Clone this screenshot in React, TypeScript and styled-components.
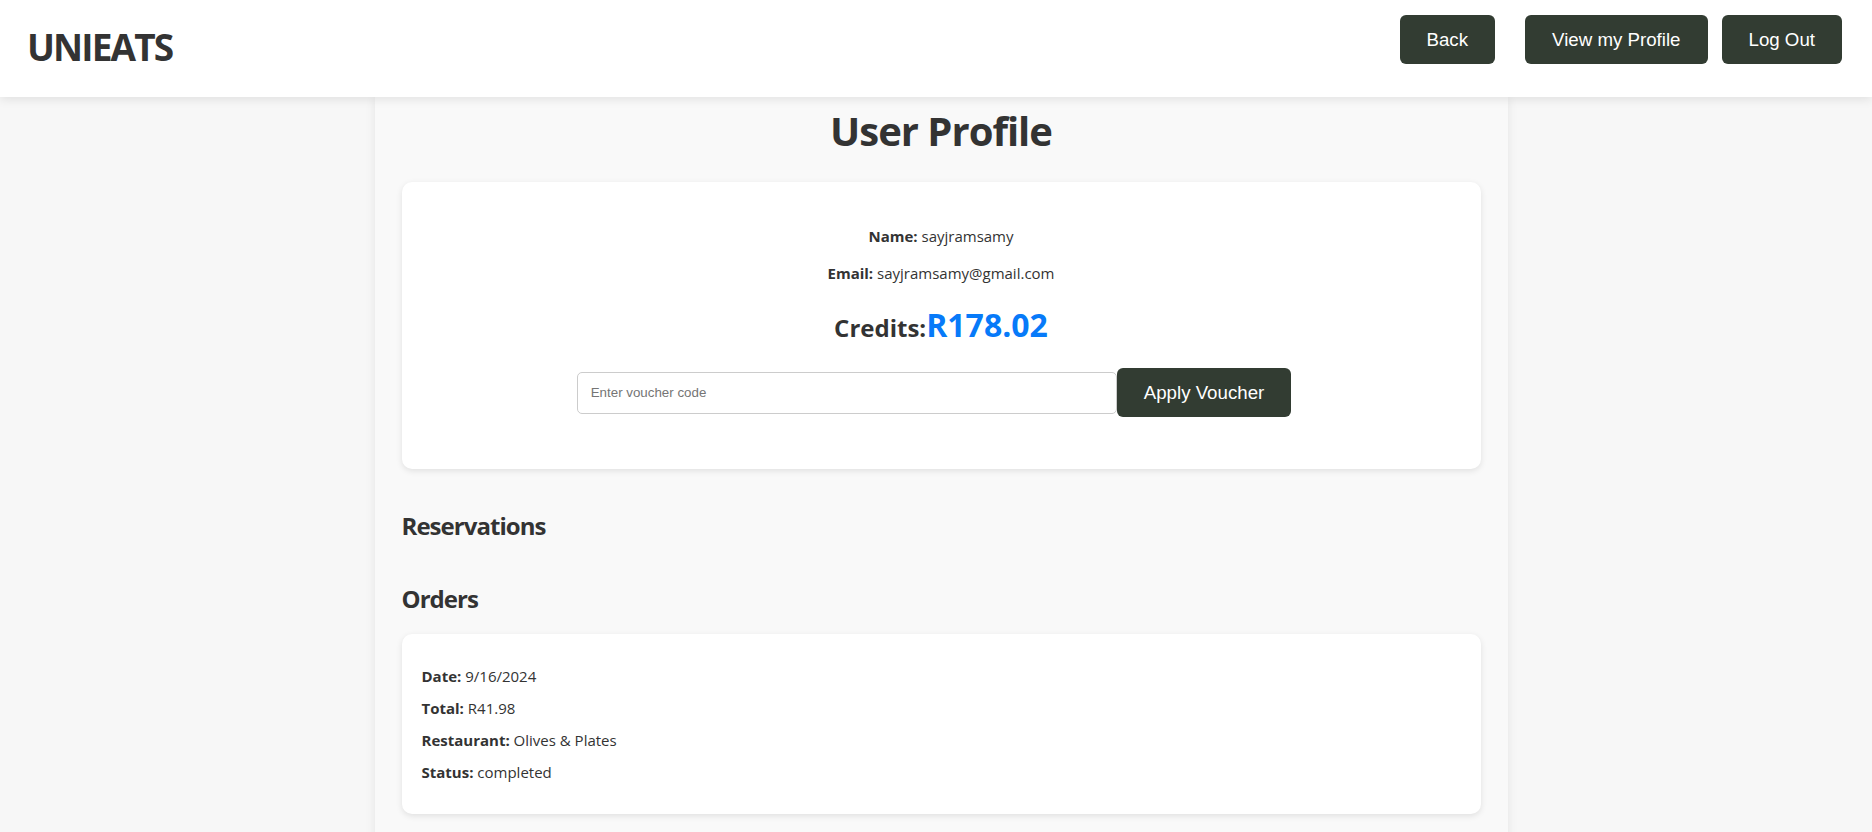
import React from 'react';
import styled, { createGlobalStyle } from 'styled-components';

const TEXT_COLOR = '#333333';
const DARK_GREEN = '#323c32';
const CREDIT_BLUE = '#077af9';
const MAIN_FONT = '"Open Sans", "Noto Sans", sans-serif';
const BUTTON_FONT = '"Liberation Sans", Arial, sans-serif';

const GlobalStyle = createGlobalStyle`
  body {
    margin: 0;
    background: #f7f7f7;
    font-family: ${MAIN_FONT};
    color: ${TEXT_COLOR};
  }
`;

const StyledHeader = styled.header`
  position: relative;
  z-index: 2;
  display: flex;
  justify-content: space-between;
  align-items: flex-start;
  height: 97px;
  box-sizing: border-box;
  padding: 0 30px 0 27px;
  background: #ffffff;
  box-shadow: 0 2px 10px rgba(0, 0, 0, 0.1);
`;

const StyledLogo = styled.h1`
  margin: 0;
  font-size: 37px;
  font-weight: 700;
  letter-spacing: -0.05em;
  line-height: 93px;
  color: ${TEXT_COLOR};
`;

const StyledNav = styled.nav`
  display: flex;
  gap: 14px;
  margin-top: 15px;
`;

const DarkButton = styled.button<{ $spaceAfter?: number }>`
  height: 49px;
  padding: 0 27px;
  margin-right: ${(p) => p.$spaceAfter || 0}px;
  border: none;
  border-radius: 6px;
  background: ${DARK_GREEN};
  color: #ffffff;
  font-family: ${BUTTON_FONT};
  font-size: 18.7px;
  cursor: pointer;
`;

const StyledLayout = styled.div`
  display: flex;
  justify-content: center;
  padding-left: 10px;
`;

const StyledContainer = styled.main`
  width: 1133px;
  min-height: calc(100vh - 97px);
  box-sizing: border-box;
  padding: 9.5px 27px 40px;
  background: #f9f9f9;
  box-shadow: 0 0 10px rgba(0, 0, 0, 0.08);
`;

const StyledTitle = styled.h1`
  margin: 0 0 27.5px;
  text-align: center;
  font-size: 40px;
  line-height: 48px;
  font-weight: 700;
  letter-spacing: -0.025em;
`;

const StyledCard = styled.section<{ $centered?: boolean }>`
  background: #ffffff;
  border-radius: 10px;
  box-shadow: 0 2px 6px rgba(0, 0, 0, 0.1);
  text-align: ${(p) => (p.$centered ? 'center' : 'left')};
`;

const ProfileCard = styled(StyledCard)`
  padding: 28px 20px 52px;
`;

const OrderCard = styled(StyledCard)`
  margin-top: 19.3px;
  padding: 20px;
`;

const InfoLine = styled.p`
  margin: 16px 0 0;
  font-size: 15px;
  line-height: 21px;
`;

const OrderLine = styled.p`
  margin: 12px 0;
  font-size: 15px;
  line-height: 20px;
`;

const Label = styled.strong`
  font-weight: 700;
`;

const StyledCredits = styled.div`
  margin-top: 21px;
  font-size: 24px;
  font-weight: 700;
  line-height: 40px;
`;

const StyledAmount = styled.span`
  font-size: 32px;
  color: ${CREDIT_BLUE};
`;

const VoucherForm = styled.form`
  display: flex;
  justify-content: center;
  align-items: center;
  margin-top: 20px;
  padding-right: 14px;
`;

const VoucherInput = styled.input`
  width: 540px;
  height: 42px;
  box-sizing: border-box;
  padding: 0 13px;
  border: 1px solid #cccccc;
  border-radius: 5px;
  font-family: ${BUTTON_FONT};
  font-size: 13.33px;
  outline: none;

  &::placeholder {
    color: #757575;
  }
`;

const SectionTitle = styled.h2<{ $top: number }>`
  margin: ${(p) => p.$top}px 0 0;
  font-size: 24px;
  line-height: 32px;
  font-weight: 700;
  letter-spacing: -0.04em;
`;

const orders = [
  { date: '9/16/2024', total: 'R41.98', restaurant: 'Olives & Plates', status: 'completed' },
];

const App: React.FC = () => {
  return (
    <>
      <GlobalStyle />
      <StyledHeader>
        <StyledLogo>UNIEATS</StyledLogo>
        <StyledNav>
          <DarkButton $spaceAfter={16}>Back</DarkButton>
          <DarkButton>View my Profile</DarkButton>
          <DarkButton>Log Out</DarkButton>
        </StyledNav>
      </StyledHeader>
      <StyledLayout>
        <StyledContainer>
          <StyledTitle>User Profile</StyledTitle>
          <ProfileCard $centered>
            <InfoLine>
              <Label>Name:</Label> sayjramsamy
            </InfoLine>
            <InfoLine>
              <Label>Email:</Label> sayjramsamy@gmail.com
            </InfoLine>
            <StyledCredits>
              Credits:<StyledAmount>R178.02</StyledAmount>
            </StyledCredits>
            <VoucherForm onSubmit={(e) => e.preventDefault()}>
              <VoucherInput type="text" placeholder="Enter voucher code" />
              <DarkButton type="submit">Apply Voucher</DarkButton>
            </VoucherForm>
          </ProfileCard>
          <SectionTitle $top={40.7}>Reservations</SectionTitle>
          <SectionTitle $top={41}>Orders</SectionTitle>
          {orders.map((order) => (
            <OrderCard key={order.date}>
              <OrderLine>
                <Label>Date:</Label> {order.date}
              </OrderLine>
              <OrderLine>
                <Label>Total:</Label> {order.total}
              </OrderLine>
              <OrderLine>
                <Label>Restaurant:</Label> {order.restaurant}
              </OrderLine>
              <OrderLine>
                <Label>Status:</Label> {order.status}
              </OrderLine>
            </OrderCard>
          ))}
        </StyledContainer>
      </StyledLayout>
    </>
  );
};

export default App;
